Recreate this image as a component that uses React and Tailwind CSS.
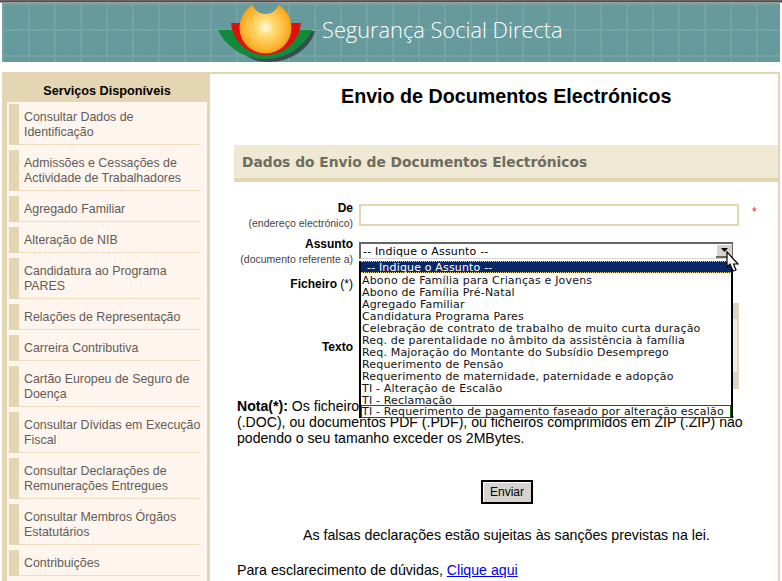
const items = [
  ["Consultar Dados de", "Identificação"],
  ["Admissões e Cessações de", "Actividade de Trabalhadores"],
  ["Agregado Familiar"],
  ["Alteração de NIB"],
  ["Candidatura ao Programa", "PARES"],
  ["Relações de Representação"],
  ["Carreira Contributiva"],
  ["Cartão Europeu de Seguro de", "Doença"],
  ["Consultar Dívidas em Execução", "Fiscal"],
  ["Consultar Declarações de", "Remunerações Entregues"],
  ["Consultar Membros Órgãos", "Estatutários"],
  ["Contribuições"],
];

const options = [
  "Abono de Família para Crianças e Jovens",
  "Abono de Família Pré-Natal",
  "Agregado Familiar",
  "Candidatura Programa Pares",
  "Celebração de contrato de trabalho de muito curta duração",
  "Req. de parentalidade no âmbito da assistência à família",
  "Req. Majoração do Montante do Subsídio Desemprego",
  "Requerimento de Pensão",
  "Requerimento de maternidade, paternidade e adopção",
  "TI - Alteração de Escalão",
  "TI - Reclamação",
];

function Logo() {
  return (
    <svg width="100" height="59" viewBox="0 0 100 59" className="absolute left-[216px] top-0">
      <defs>
        <radialGradient id="sun" cx="0.5" cy="0.5" r="0.52">
          <stop offset="0" stopColor="#fffbe8" />
          <stop offset="0.3" stopColor="#ffdd78" />
          <stop offset="0.8" stopColor="#fcb42e" />
          <stop offset="1" stopColor="#f0981a" />
        </radialGradient>
      </defs>
      <path d="M14 33 L97 28 C92 46 72 59 50 59 C30 59 20 48 14 33Z" fill="#2a3a3a" opacity="0.8" />
      <path d="M0 27 L94 27 C86 44 68 56 47 56 C26 56 8 44 0 27Z" fill="#118a3c" />
      <path d="M13 20 L83 20 C81 38 66 52 47.500 52 C29 52 15 38 13 20Z" fill="#e00f0a" />
      <circle cx="47.500" cy="24.500" r="26" fill="url(#sun)" />
      <circle cx="47.500" cy="-3" r="14" fill="#669a9d" />
    </svg>
  );
}

export default function App() {
  return (
    <div className="relative h-[581px] w-[782px] overflow-hidden bg-white font-['Liberation_Sans',Arial,sans-serif] text-black">
      <div className="h-[3px] bg-[linear-gradient(#777,#444_60%,#ddd)]" />
      <header className="relative mx-[2px] h-[59px] overflow-hidden bg-[#669a9d] bg-[linear-gradient(#72a4a6_2px,transparent_2px),linear-gradient(90deg,#72a4a6_2px,transparent_2px),radial-gradient(#5f9699_1px,transparent_1px)] bg-[size:26px_26px,26px_26px,3px_3px]">
        <Logo />
        <span className="absolute left-[320px] top-[13px] font-['Open_Sans',sans-serif] text-[21.8px] font-light leading-7 text-white">
          Segurança Social Directa
        </span>
      </header>

      <div className="mx-[2px] mt-[10px] flex h-[520px] items-start">
        <aside className="h-full w-[208px] shrink-0 bg-[#e5d6b3] pl-[5px] pr-[3px]">
          <h2 className="h-[30px] pt-[11px] text-center text-[12.7px] leading-4 font-bold text-black">
            Serviços Disponíveis
          </h2>
          <ul className="h-full bg-[#fef5ee] pl-[2px] pt-[2px] pr-[7px] text-[12.4px] leading-[15px] text-[#635c56]">
            {items.map((lines) => (
              <li key={lines[0]} className="mb-[5px] flex">
                <div className="w-[10px] shrink-0 bg-[#e5d6b3]" />
                <div className="flex-1 border-b border-[#eedcbe] pb-[4px] pl-[5px] pt-[6px]">
                  {lines.map((l) => (
                    <div key={l} className="whitespace-nowrap">{l}</div>
                  ))}
                </div>
              </li>
            ))}
          </ul>
        </aside>

        <main className="relative h-full flex-1 border-r-2 border-t-2 border-[#e5d6b3]">
          <h1 className="pl-[131px] pt-[10px] text-[19.7px] leading-6 font-bold">Envio de Documentos Electrónicos</h1>
          <div className="ml-[24px] mt-[37px] h-[37px] border-b-4 border-[#e5d6b3] bg-[#efe8d2] pl-[8px] font-['DejaVu_Sans',Verdana,sans-serif] text-[13.8px] leading-[35px] font-bold text-[#6e6c60]">
            Dados do Envio de Documentos Electrónicos
          </div>

          <div className="mt-[19px] flex">
            <div className="w-[143px] text-right">
              <div className="text-xs leading-[15px] font-bold">De</div>
              <div className="mt-[1px] text-[10.5px] leading-3 text-[#444]">(endereço electrónico)</div>
            </div>
            <div className="ml-[6px] mt-[3px] h-[22px] w-[380px] border-2 border-[#e5d6b3]" />
            <span className="ml-[13px] mt-[3px] text-xs text-[#e8184a]">*</span>
          </div>

          <div className="mt-[8px] w-[143px] text-right">
            <div className="text-xs leading-[15px] font-bold">Assunto</div>
            <div className="mt-[1px] text-[10.5px] leading-3 text-[#444]">(documento referente a)</div>
          </div>
          <div className="mt-[12px] w-[143px] text-right text-xs leading-[15px] font-bold">
            Ficheiro <span className="font-normal">(*)</span>
          </div>
          <div className="mt-[48px] w-[143px] text-right text-xs leading-[15px] font-bold">Texto</div>

          <p className="ml-[27px] mt-[43px] w-[520px] text-[14.1px] leading-4">
            <b>Nota(*):</b> Os ficheiro
            <br />
            (.DOC), ou documentos PDF (.PDF), ou ficheiros comprimidos em ZIP (.ZIP) não
            <br />
            podendo o seu tamanho exceder os 2MBytes.
          </p>

          <div className="mt-[33px] pl-[271px]">
            <button className="h-[24px] w-[52px] border-2 border-black bg-[#d6d3ce] text-xs text-black shadow-[inset_1px_1px_0_#fff]">
              Enviar
            </button>
          </div>
          <p className="mt-[21px] pl-[93px] text-[14.2px] leading-5">As falsas declarações estão sujeitas às sanções previstas na lei.</p>
          <p className="mt-[15px] pl-[27px] text-[14.2px] leading-5">
            Para esclarecimento de dúvidas, <span className="text-[#0000ee] underline">Clique aqui</span>
          </p>

          {/* textarea sliver behind the dropdown */}
          <div className="absolute left-[523px] top-[229px] flex h-[86px] w-[6px] flex-col border-y-2 border-r-2 border-[#e5d6b3]">
            <div className="h-[14px] bg-[#d6d3ce]" />
            <div className="flex-1 bg-[#ecebe8]" />
            <div className="h-[15px] bg-[#d6d3ce]" />
          </div>

          {/* open select */}
          <div className="absolute left-[149px] top-[168px] w-[374px] font-['DejaVu_Sans',Verdana,sans-serif] text-[11px] leading-3 tracking-[0.17px]">
            <div className="h-[19px] bg-white">
              <div className="flex h-[17px] border-b border-l-2 border-t-2 border-[#666] border-b-[#d6d3ce]">
                <span className="flex-1 pl-[2px] leading-[16px]">-- Indique o Assunto --</span>
                <div className="flex h-[14px] w-[17px] items-center justify-center border-b-2 border-r border-[#666] bg-[#d6d3ce] shadow-[inset_1px_1px_0_#fff]">
                  <svg width="7" height="4" viewBox="0 0 7 4"><path d="M0 0H7L3.500 4Z" fill="#000" /></svg>
                </div>
              </div>
            </div>
            <div className="border-x-2 border-black bg-white">
              <div className="h-[12px] whitespace-nowrap border-y border-dotted border-[#e6d27a] bg-[#0a2768] pl-[6px] leading-[12px] text-white">-- Indique o Assunto --</div>
              {options.map((o) => (
                <div key={o} className="h-[12px] whitespace-nowrap pl-[1px] leading-[15px] text-[#111]">{o}</div>
              ))}
              <div className="h-[13px] whitespace-nowrap border border-[#0a6a0a] leading-[12px] text-[#111]">TI - Requerimento de pagamento faseado por alteração escalão</div>
            </div>
          </div>
        </main>
      </div>

      {/* cursor */}
      <svg width="14" height="22" viewBox="0 0 14 22" className="absolute left-[726px] top-[251px]">
        <path d="M1 1V16L4 13L7 20L10 19L7.500 13H12Z" fill="#fff" stroke="#000" strokeWidth="1.200" />
      </svg>
    </div>
  );
}
